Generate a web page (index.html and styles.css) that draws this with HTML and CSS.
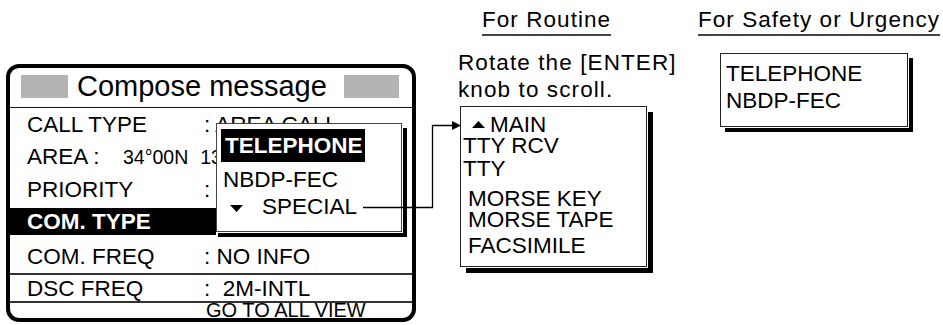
FILE: index.html
```html
<!DOCTYPE html>
<html lang="en">
<head>
<meta charset="utf-8">
<title>Compose message</title>
<link rel="stylesheet" href="styles.css">
</head>
<body>
<div class="page">
  <div class="compose">
    <div class="title">
      <span class="gray gray-l"></span>
      <span class="title-text">Compose message</span>
      <span class="gray gray-r"></span>
    </div>
    <div class="row r1"><span class="lbl">CALL TYPE</span><span class="val">: AREA CALL</span></div>
    <div class="row r2"><span class="area">AREA :</span><span class="coord">34°00N</span><span class="coord lon">134°00E</span></div>
    <div class="row r3"><span class="lbl">PRIORITY</span><span class="val">:</span></div>
    <div class="row r4"><span class="selbar">COM. TYPE</span></div>
    <div class="row r5"><span class="lbl">COM. FREQ</span><span class="val">: NO INFO</span></div>
    <div class="row r6"><span class="lbl">DSC FREQ</span><span class="val">:&nbsp; 2M-INTL</span></div>
    <div class="row r7"><span class="lbl"></span><span class="val go">GO TO ALL VIEW</span></div>
    <div class="popup">
      <div class="hl">TELEPHONE</div>
      <div class="nbdp">NBDP-FEC</div>
      <div class="special"><svg class="tri" width="13" height="7" viewBox="0 0 13 7"><polygon points="0,0 13,0 6.5,7" fill="#000"/></svg><span>SPECIAL</span></div>
    </div>
  </div>

  <div class="routine">
    <div class="head">For Routine</div>
    <p class="hint">Rotate the [ENTER]<br>knob to scroll.</p>
    <div class="list">
      <div class="li main"><svg class="tri" width="13" height="7" viewBox="0 0 13 7"><polygon points="0,7 13,7 6.5,0" fill="#000"/></svg><span>MAIN</span></div>
      <div class="li rcv">TTY RCV</div>
      <div class="li tty">TTY</div>
      <div class="li morse key">MORSE KEY</div>
      <div class="li morse tape">MORSE TAPE</div>
      <div class="li morse fax">FACSIMILE</div>
    </div>
  </div>

  <div class="safety">
    <div class="head">For Safety or Urgency</div>
    <div class="list small">
      <div>TELEPHONE</div>
      <div>NBDP-FEC</div>
    </div>
  </div>

  <svg class="connector" width="943" height="325" viewBox="0 0 943 325">
    <path d="M363 207.5H432.5V125.5H454" fill="none" stroke="#000" stroke-width="1.3"/>
    <polygon points="452,121 461,125.5 452,130" fill="#000"/>
  </svg>
</div>
</body>
</html>
```

FILE: styles.css
```css
* {
  box-sizing: border-box;
}

body {
  margin: 0;
  background: #fff;
  color: #000;
  font-family: "Liberation Sans", Arial, sans-serif;
}

.page {
  position: relative;
  width: 943px;
  height: 325px;
  display: flex;
  align-items: flex-start;
  overflow: hidden;
}

/* ---------- Compose message window ---------- */
.compose {
  position: relative;
  flex: none;
  margin: 64px 0 0 6px;
  width: 410px;
  height: 258px;
  border: 4px solid #000;
  border-radius: 13px;
  font-size: 22.5px;
}

.title {
  display: flex;
  align-items: flex-start;
  height: 40px;
  padding-left: 11px;
  border-bottom: 1px solid #111;
}

.gray {
  flex: none;
  height: 23px;
  margin-top: 7px;
  background: #b3b3b3;
}

.gray-l {
  width: 47px;
}

.gray-r {
  width: 55px;
  margin-left: 17px;
}

.title-text {
  margin-left: 9px;
  font-size: 29px;
  line-height: 36px;
  white-space: nowrap;
}

.row {
  display: flex;
  padding-left: 17px;
  line-height: 24px;
  white-space: nowrap;
}

.lbl {
  flex: none;
  width: 177px;
}

.r1 {
  height: 34px;
  padding-top: 5px;
}

.r2 {
  height: 31px;
  padding-top: 3px;
}

.area {
  flex: none;
  width: 96px;
}

.coord {
  font-size: 19.5px;
}

.lon {
  margin-left: 12px;
}

.r3 {
  height: 35px;
  padding-top: 5px;
}

.r4 {
  height: 27px;
  padding-left: 0;
}

.selbar {
  width: 206px;
  height: 27px;
  padding-left: 17px;
  background: #000;
  color: #fff;
  font-weight: bold;
  line-height: 27px;
}

.r5 {
  height: 40px;
  padding-top: 10px;
  border-bottom: 2px solid #333;
}

.r6 {
  height: 28px;
  padding-top: 2px;
  border-bottom: 2px solid #333;
}

.r7 {
  height: 15px;
  font-size: 20px;
  line-height: 15px;
}

.go {
  margin-left: 2px;
}

/* ---------- pop-up menu ---------- */
.popup {
  position: absolute;
  left: 206px;
  top: 55px;
  width: 186px;
  height: 109px;
  border: 1px solid #444;
  background: #fff;
  box-shadow: 1px 1px 0 #fff, 5px 5px 0 #000, 2px 5px 0 #000;
  line-height: 24px;
  white-space: nowrap;
}

.hl {
  width: 144px;
  height: 33px;
  margin: 5px 0 0 4px;
  padding-left: 4px;
  background: #000;
  color: #fff;
  font-weight: bold;
  line-height: 33px;
}

.nbdp {
  margin-top: 6px;
  padding-left: 6px;
}

.special {
  margin-top: 3px;
  padding-left: 13px;
}

.special .tri {
  vertical-align: 2px;
  margin-right: 19px;
}

/* ---------- right-hand columns ---------- */
.routine {
  flex: none;
  width: 240px;
  margin-left: 42px;
}

.safety {
  flex: none;
}

.head {
  width: max-content;
  margin-top: 8px;
  padding-bottom: 2px;
  border-bottom: 2px solid #444;
  font-size: 22.5px;
  line-height: 24px;
  letter-spacing: 1.05px;
}

.routine .head {
  margin-left: 24px;
}

.hint {
  margin: 13px 0 0;
  font-size: 22.5px;
  line-height: 27px;
  letter-spacing: 1.1px;
}

.list {
  width: 187px;
  height: 161px;
  margin: 3px 0 0 2px;
  padding-top: 7px;
  border: 1px solid #222;
  background: #fff;
  box-shadow: 1px 1px 0 #fff, 6px 6px 0 #000;
  font-size: 22.5px;
  line-height: 24px;
  white-space: nowrap;
}

.li {
  padding-left: 2px;
}

.li.main {
  padding-left: 11px;
  line-height: 21px;
}

.main .tri {
  vertical-align: 4px;
  margin-right: 5px;
}

.li.rcv {
  line-height: 22px;
}

.li.morse {
  padding-left: 7px;
}

.li.key {
  margin-top: 7px;
  line-height: 21px;
}

.li.tape {
  line-height: 22px;
}

.li.fax {
  margin-top: 3px;
}

.list.small {
  width: 188px;
  height: 74px;
  margin: 17px 0 0 22px;
  padding: 6px 0 0 5px;
  line-height: 27px;
  box-shadow: 1px 1px 0 #fff, 5px 5px 0 #000;
}

.connector {
  position: absolute;
  left: 0;
  top: 0;
  pointer-events: none;
}
```
